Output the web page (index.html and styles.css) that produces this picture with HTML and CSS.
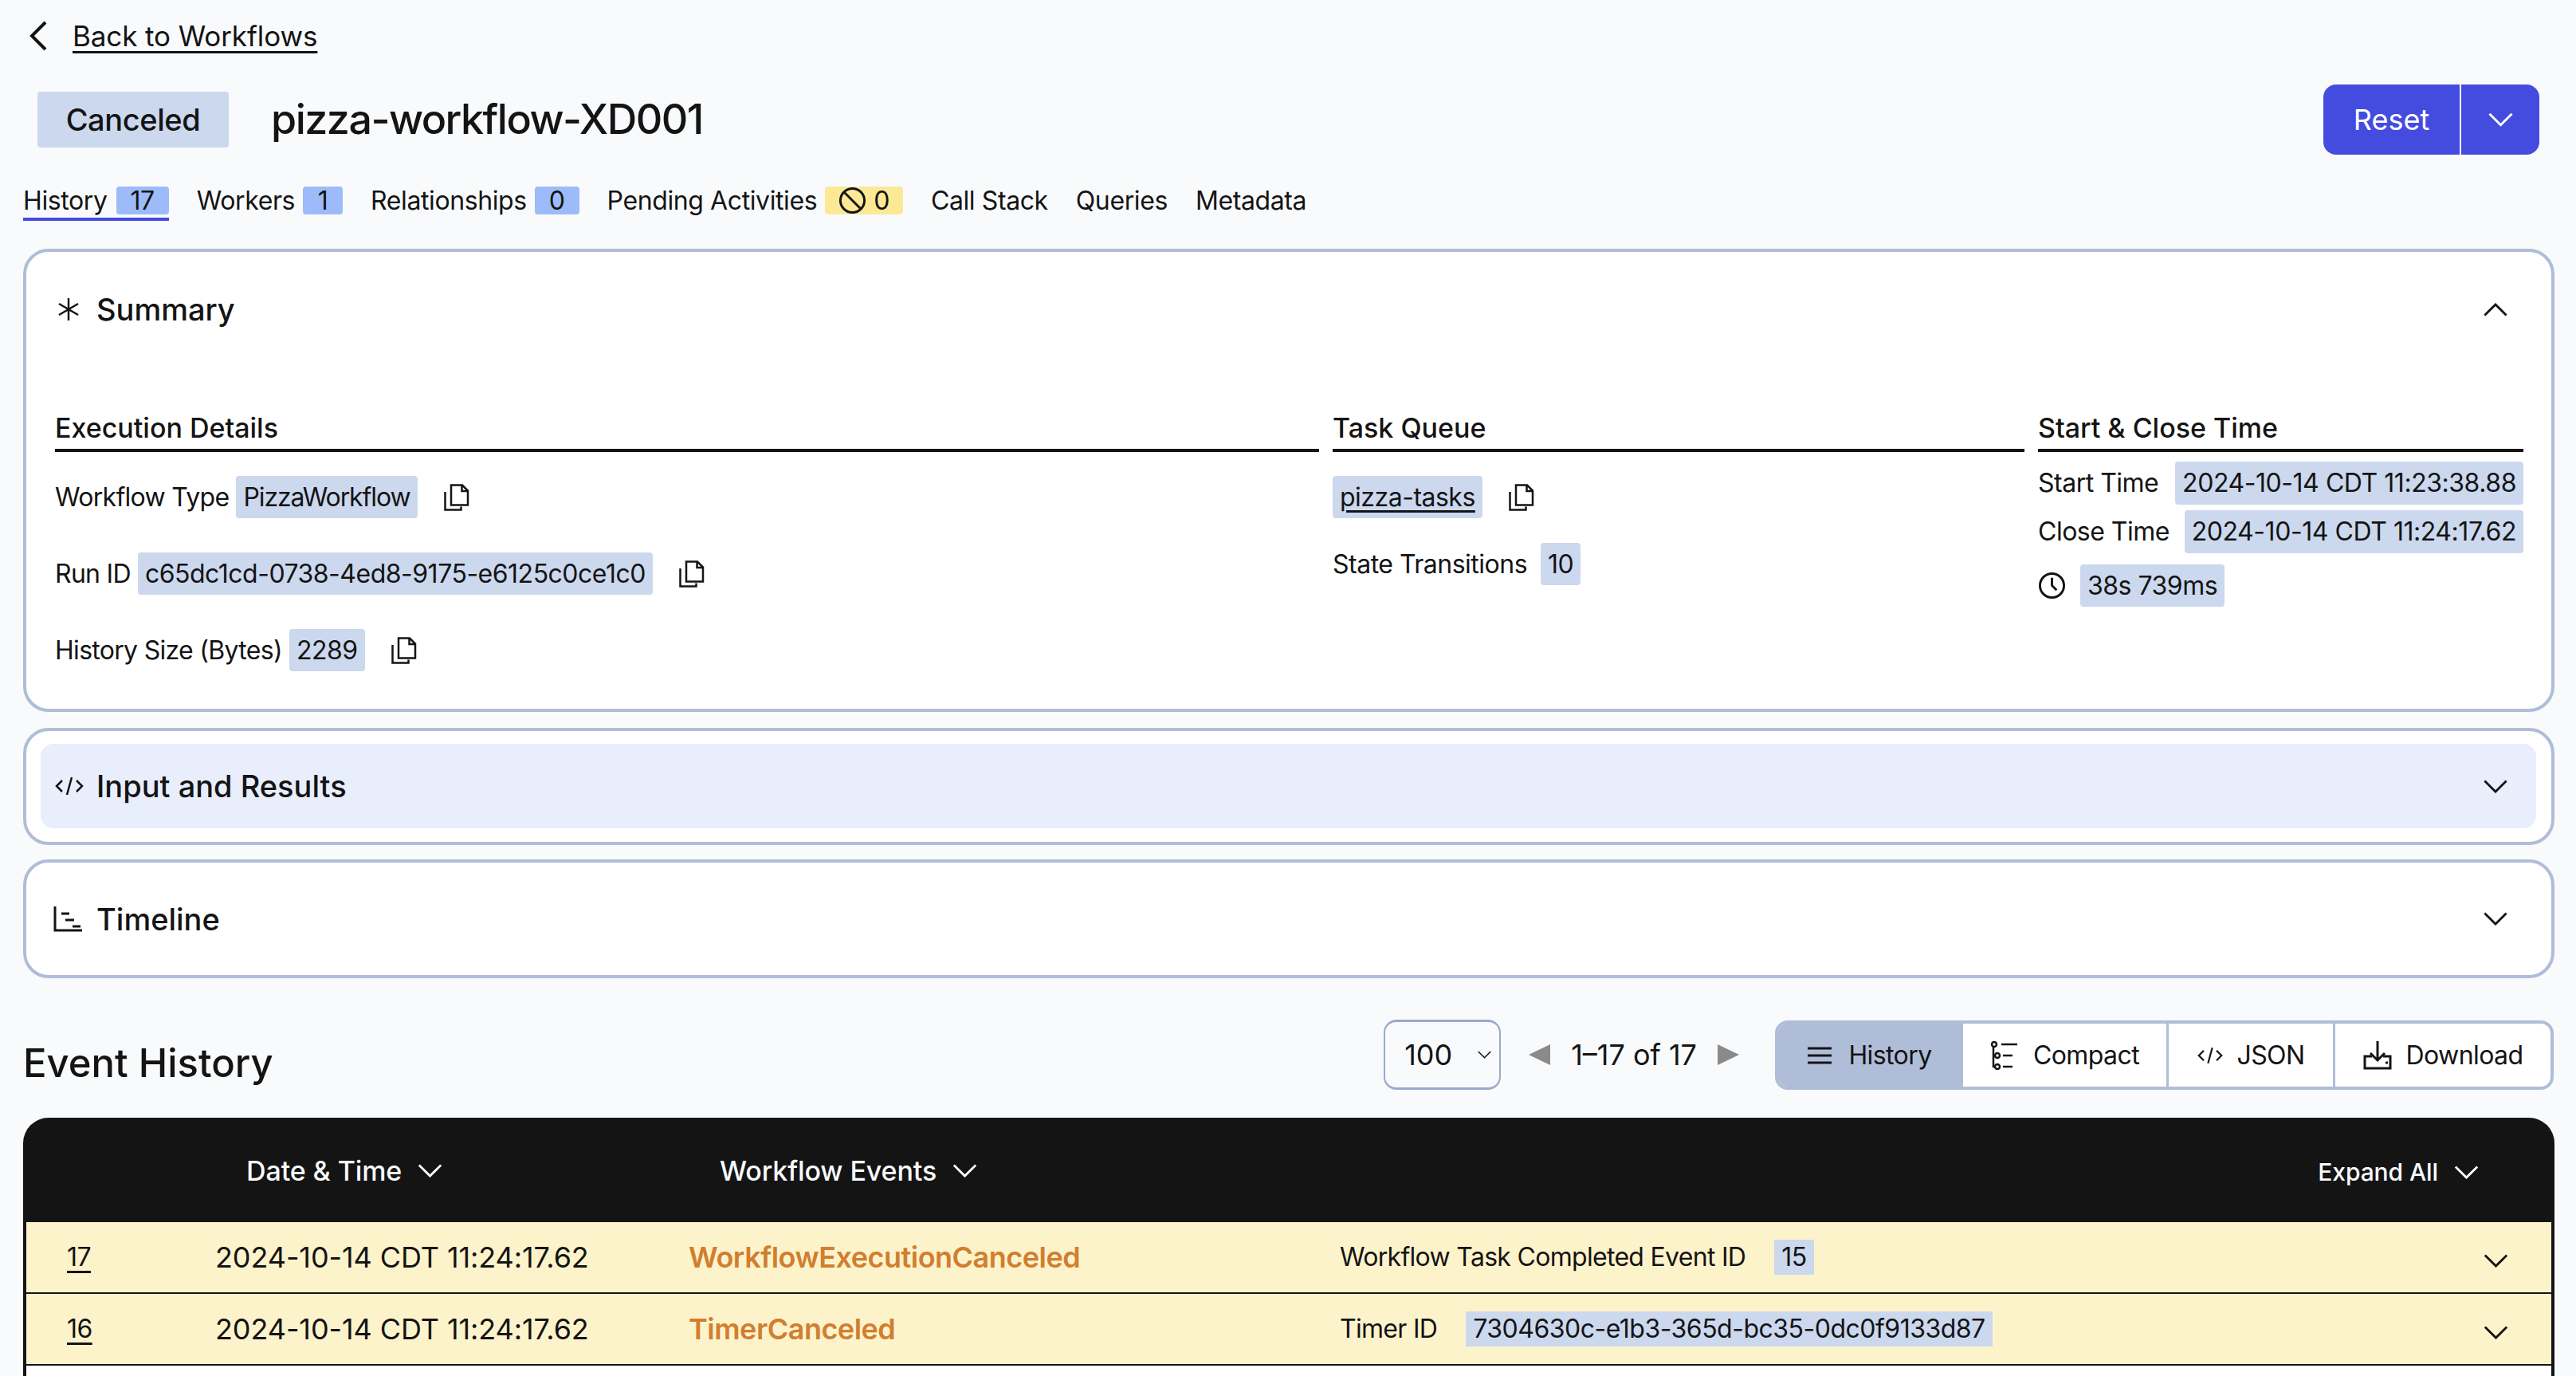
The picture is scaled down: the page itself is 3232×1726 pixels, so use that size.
FILE: index.html
```html
<!DOCTYPE html>
<html lang="en">
<head>
    <meta charset="UTF-8">
    <title>pizza-workflow-XD001</title>
    <link rel="stylesheet" href="styles.css">
</head>
<body>
    <svg class="defs" width="0" height="0">
        <symbol id="copy" viewBox="0 0 32 34">
            <path d="M9 1.500h14l7 7v18H9z M22.500 1.500v7.500h7.500" fill="none" stroke="currentColor" stroke-width="2.500"/>
            <path d="M1.500 10v22.500h20v-4" fill="none" stroke="currentColor" stroke-width="2.500"/>
        </symbol>
        <symbol id="down" viewBox="0 0 32 18">
            <path d="M1.500 1.500L16 16 30.500 1.500" fill="none" stroke="currentColor" stroke-width="3"/>
        </symbol>
    </svg>

    <div class="page">
        <a class="back">
            <svg class="back-icon" viewBox="0 0 22 38"><path d="M20 2L3 19l17 17" fill="none" stroke="currentColor" stroke-width="4"/></svg>
            <span>Back to Workflows</span>
        </a>

        <header class="head">
            <span class="status">Canceled</span>
            <h1>pizza-workflow-XD001</h1>
            <div class="reset">
                <button class="reset-main">Reset</button>
                <button class="reset-more"><svg class="chev-btn"><use href="#down"/></svg></button>
            </div>
        </header>

        <nav class="tabs">
            <a class="tab active">History <span class="count">17</span></a>
            <a class="tab">Workers <span class="count">1</span></a>
            <a class="tab">Relationships <span class="count">0</span></a>
            <a class="tab">Pending Activities <span class="count warn">
                <svg class="ban" viewBox="0 0 36 36"><circle cx="18" cy="18" r="15.500" fill="none" stroke="currentColor" stroke-width="3"/><path d="M7 7l22 22" stroke="currentColor" stroke-width="3"/></svg>0</span></a>
            <a class="tab">Call Stack</a>
            <a class="tab">Queries</a>
            <a class="tab">Metadata</a>
        </nav>

        <section class="card summary">
            <div class="card-head">
                <svg class="card-icon" viewBox="0 0 30 30"><path d="M15 1v28M3 8l24 14M27 8L3 22" fill="none" stroke="currentColor" stroke-width="2.500"/></svg>
                <h2>Summary</h2>
                <svg class="chev-card flip"><use href="#down"/></svg>
            </div>
            <div class="details">
                <div class="col">
                    <h3>Execution Details</h3>
                    <div class="rows">
                        <div class="row">Workflow Type <span class="pill tight">PizzaWorkflow</span><svg class="copy"><use href="#copy"/></svg></div>
                        <div class="row">Run ID <span class="pill">c65dc1cd-0738-4ed8-9175-e6125c0ce1c0</span><svg class="copy"><use href="#copy"/></svg></div>
                        <div class="row">History Size (Bytes) <span class="pill">2289</span><svg class="copy"><use href="#copy"/></svg></div>
                    </div>
                </div>
                <div class="col">
                    <h3>Task Queue</h3>
                    <div class="rows queue">
                        <div class="row"><span class="pill link">pizza-tasks</span><svg class="copy"><use href="#copy"/></svg></div>
                        <div class="row">State Transitions <span class="pill">10</span></div>
                    </div>
                </div>
                <div class="col">
                    <h3>Start &amp; Close Time</h3>
                    <div class="times">
                        <div class="row spread">Start Time <span class="pill date">2024-10-14 CDT 11:23:38.88</span></div>
                        <div class="row spread">Close Time <span class="pill date">2024-10-14 CDT 11:24:17.62</span></div>
                        <div class="row duration">
                            <svg class="clock" viewBox="0 0 36 36"><circle cx="18" cy="18" r="15.500" fill="none" stroke="currentColor" stroke-width="3"/><path d="M18 8v10l6 6" fill="none" stroke="currentColor" stroke-width="3"/></svg>
                            <span class="pill">38s 739ms</span>
                        </div>
                    </div>
                </div>
            </div>
        </section>

        <section class="card input">
            <div class="card-head hover">
                <svg class="card-icon code" viewBox="0 0 36 24"><path d="M9 5l-7 7 7 7M27 5l7 7-7 7M21 1l-6 22" fill="none" stroke="currentColor" stroke-width="2.500"/></svg>
                <h2>Input and Results</h2>
                <svg class="chev-card"><use href="#down"/></svg>
            </div>
        </section>

        <section class="card timeline">
            <div class="card-head">
                <svg class="card-icon line" viewBox="0 0 36 32"><path d="M2 0v30h34M10 9h10M15 17h11M24 25h10" fill="none" stroke="currentColor" stroke-width="3"/></svg>
                <h2>Timeline</h2>
                <svg class="chev-card"><use href="#down"/></svg>
            </div>
        </section>

        <div class="events-bar">
            <h2 class="events-title">Event History</h2>
            <div class="select">100 <svg class="chev-select"><use href="#down"/></svg></div>
            <div class="pager">
                <span class="tri left"></span>
                <span>1–17 of 17</span>
                <span class="tri right"></span>
            </div>
            <div class="views">
                <a class="view active">
                    <svg class="view-icon" viewBox="0 0 32 24"><path d="M1 3h30M1 12h30M1 21h30" stroke="currentColor" stroke-width="3"/></svg>History</a>
                <a class="view compact">
                    <svg class="view-icon" viewBox="0 0 36 36"><circle cx="5" cy="4" r="3" fill="none" stroke="currentColor" stroke-width="2.500"/><circle cx="9" cy="18" r="3" fill="none" stroke="currentColor" stroke-width="2.500"/><circle cx="9" cy="32" r="3" fill="none" stroke="currentColor" stroke-width="2.500"/><path d="M4 7v25h2M4 18h2M14 4h20M16 18h12M16 32h12" fill="none" stroke="currentColor" stroke-width="2.500"/></svg>Compact</a>
                <a class="view json">
                    <svg class="view-icon" viewBox="0 0 36 24"><path d="M9 5l-7 7 7 7M27 5l7 7-7 7M21 1l-6 22" fill="none" stroke="currentColor" stroke-width="2.500"/></svg>JSON</a>
                <a class="view download">
                    <svg class="view-icon" viewBox="0 0 36 36"><path d="M18 0v24M9 15l9 9 9-9M11 19H2v15h32V19h-9M28 27h3" fill="none" stroke="currentColor" stroke-width="3"/></svg>Download</a>
            </div>
        </div>

        <div class="table">
            <div class="table-head">
                <span class="th th-date">Date &amp; Time <svg class="chev-th"><use href="#down"/></svg></span>
                <span class="th th-events">Workflow Events <svg class="chev-th"><use href="#down"/></svg></span>
                <span class="th th-expand">Expand All <svg class="chev-th"><use href="#down"/></svg></span>
            </div>
            <div class="event">
                <a class="event-id">17</a>
                <span class="event-date">2024-10-14 CDT 11:24:17.62</span>
                <span class="event-name">WorkflowExecutionCanceled</span>
                <span class="event-attr">Workflow Task Completed Event ID <span class="code-val">15</span></span>
                <svg class="chev-row"><use href="#down"/></svg>
            </div>
            <div class="event">
                <a class="event-id">16</a>
                <span class="event-date">2024-10-14 CDT 11:24:17.62</span>
                <span class="event-name">TimerCanceled</span>
                <span class="event-attr">Timer ID <span class="code-val">7304630c-e1b3-365d-bc35-0dc0f9133d87</span></span>
                <svg class="chev-row"><use href="#down"/></svg>
            </div>
            <div class="event-empty"></div>
        </div>
    </div>
</body>
</html>
```

FILE: styles.css
```css
*{
    box-sizing: border-box;
}
html, body{
    margin: 0;
    height: 100%;
    overflow: hidden;
}
body{
    background-color: #f8fafc;
    color: #141414;
    font-family: Inter, "Noto Sans", sans-serif;
    font-size: 32px;
    line-height: 48px;
    letter-spacing: -0.6px;
}
h1, h2, h3{
    margin: 0;
    font-weight: 500;
}
svg{
    display: block;
    flex: none;
}
.defs{
    position: absolute;
}
.page{
    padding: 0 28px 0 29px;
}

/* top */
.back{
    display: flex;
    align-items: center;
    height: 90px;
    padding-left: 8px;
    gap: 32px;
    font-size: 35px;
    letter-spacing: -0.1px;
}
.back span{
    text-decoration: underline;
    text-underline-offset: 6px;
}
.back-icon{
    width: 22px;
    height: 38px;
}
.head{
    display: flex;
    align-items: center;
    height: 88px;
    margin-top: 16px;
    padding-left: 18px;
}
.status{
    display: flex;
    align-items: center;
    justify-content: center;
    width: 240px;
    height: 70px;
    background: #cbd8ee;
    border-radius: 4px;
    font-size: 38px;
    font-weight: 500;
    letter-spacing: -0.4px;
}
h1{
    margin-left: 53px;
    font-size: 52px;
    line-height: 72px;
    letter-spacing: -1.5px;
}
.reset{
    display: flex;
    height: 88px;
    margin-left: auto;
    margin-right: 18px;
    background: #444ce0;
    border-radius: 16px;
    color: white;
}
.reset button{
    border: 0;
    background: none;
    color: inherit;
    font: inherit;
    font-size: 36px;
    padding: 0;
}
.reset-main{
    width: 173px;
    border-right: 2px solid white !important;
}
.reset-more{
    display: flex;
    align-items: center;
    justify-content: center;
    width: 98px;
}
.chev-btn{
    width: 31px;
    height: 18px;
}

/* tabs */
.tabs{
    display: flex;
    gap: 35px;
    height: 43px;
    margin-top: 40px;
    margin-bottom: 35px;
    letter-spacing: -0.4px;
}
.tab{
    display: flex;
    gap: 10px;
    height: 43px;
    line-height: 35px;
}
.tab.active{
    gap: 11px;
    border-bottom: 4px solid #444ce0;
}
.count{
    display: flex;
    align-items: center;
    justify-content: center;
    height: 35px;
    min-width: 50px;
    padding: 0 18px;
    background: #9dbbf8;
    border-radius: 4px;
}
.count.warn{
    gap: 9px;
    padding: 0 17px;
    background: #fbe996;
}
.ban{
    width: 35px;
    height: 35px;
}

/* cards */
.card{
    border: 4px solid #b0bdd8;
    border-radius: 32px;
    background: white;
    margin-right: -1px;
}
.card-head{
    display: flex;
    align-items: center;
    height: 144px;
    padding: 0 55px 0 38px;
}
.card-head h2{
    font-size: 38px;
    letter-spacing: 0;
}
.card-icon{
    width: 30px;
    height: 30px;
    margin-right: 20px;
}
.card-icon.code{
    width: 36px;
    height: 24px;
    margin-right: 16px;
}
.card-icon.line{
    width: 36px;
    height: 32px;
    margin-right: 18px;
}
.chev-card{
    width: 30px;
    height: 17px;
    margin-left: auto;
}
.flip{
    transform: rotate(180deg);
}
.input{
    margin-top: 20px;
    height: 147px;
    padding: 16px 19px 16px 18px;
}
.input .card-head{
    height: 106px;
    padding: 0 36px 0 18px;
    background: #e8eefc;
    border-radius: 16px;
}
.timeline{
    margin-top: 18px;
    height: 149px;
}
.timeline .card-head{
    height: 141px;
    padding-left: 34px;
}

/* summary */
.details{
    display: grid;
    grid-template-columns: 1586px 868px 609px;
    gap: 17px;
    margin-top: 53px;
    padding: 0 34px 47px 36px;
}
h3{
    font-size: 34px;
    line-height: 48px;
    letter-spacing: 0;
    padding-bottom: 2px;
    border-bottom: 4px solid #141414;
}
.rows{
    display: flex;
    flex-direction: column;
    gap: 43px;
    margin-top: 30px;
}
.queue{
    gap: 31px;
}
.times{
    display: flex;
    flex-direction: column;
    gap: 7px;
    margin-top: 12px;
}
.row{
    display: flex;
    align-items: center;
    gap: 9px;
    height: 53px;
    white-space: nowrap;
    letter-spacing: -0.7px;
}
.queue .row, .times .row{
    gap: 17px;
    letter-spacing: -0.5px;
}
.times .spread{
    justify-content: space-between;
    height: 54px;
}
.times .duration{
    gap: 18px;
    margin-top: 7px;
}
.pill{
    display: block;
    height: 53px;
    line-height: 53px;
    padding: 0 9px;
    background: #cbd8ee;
    border-radius: 4px;
    letter-spacing: -0.5px;
}
.pill.tight{
    letter-spacing: -1.1px;
}
.pill.date{
    height: 54px;
    line-height: 54px;
    letter-spacing: -0.45px;
}
.pill.link{
    text-decoration: underline;
    text-underline-offset: 5px;
}
.copy{
    width: 32px;
    height: 34px;
    margin-left: 24px;
}
.queue .copy{
    margin-left: 16px;
}
.clock{
    width: 35px;
    height: 35px;
}

/* event bar */
.events-bar{
    display: flex;
    align-items: flex-end;
    height: 88px;
    margin-top: 52px;
}
.events-title{
    font-size: 49px;
    line-height: 72px;
    letter-spacing: 0;
    margin-right: auto;
    margin-bottom: -3px;
}
.select{
    display: flex;
    align-items: center;
    justify-content: space-between;
    width: 147px;
    height: 88px;
    padding: 0 10px 0 24px;
    border: 2px solid #9aa9cc;
    border-top-width: 3px;
    border-bottom-width: 3px;
    border-radius: 16px;
    font-size: 36px;
    letter-spacing: 0;
}
.chev-select{
    width: 17px;
    height: 10px;
}
.pager{
    display: flex;
    align-items: center;
    gap: 26px;
    height: 88px;
    margin-left: 35px;
    margin-right: 45px;
    font-size: 36px;
    letter-spacing: 0;
}
.tri{
    width: 0;
    height: 0;
    border-top: 13px solid transparent;
    border-bottom: 13px solid transparent;
}
.tri.left{
    border-right: 27px solid #8a8a8a;
}
.tri.right{
    border-left: 27px solid #8a8a8a;
}
.views{
    display: flex;
    width: 977px;
    height: 87px;
    border: 4px solid #b0bdd8;
    border-radius: 16px;
    background: white;
    overflow: hidden;
}
.view{
    display: flex;
    align-items: center;
    justify-content: center;
    gap: 18px;
    border-left: 3px solid #b0bdd8;
}
.view.active{
    width: 229px;
    background: #b0bdd8;
    border-left: 0;
    gap: 20px;
}
.view.compact{
    width: 258px;
}
.view.json{
    width: 209px;
}
.view.download{
    flex: 1;
}
.view-icon{
    width: 32px;
    height: 32px;
}
.view.compact .view-icon, .view.download .view-icon{
    width: 36px;
    height: 36px;
}

/* table */
.table{
    margin-top: 35px;
    margin-right: -1px;
}
.table-head{
    display: flex;
    align-items: center;
    height: 131px;
    padding: 2px 95px 0 280px;
    background: #141414;
    border-radius: 32px 32px 0 0;
    color: #f8fafc;
}
.th{
    display: flex;
    align-items: center;
    gap: 20px;
    font-size: 34px;
    font-weight: 500;
    letter-spacing: -0.1px;
}
.th-date{
    width: 594px;
}
.th-expand{
    margin-left: auto;
    margin-top: 3px;
    font-size: 30px;
}
.chev-th{
    width: 31px;
    height: 17px;
}
.event{
    display: grid;
    grid-template-columns: 186px 594px 817px 1fr 31px;
    align-items: center;
    height: 90px;
    padding: 0 54px 0 51px;
    background: #fdf3cb;
    border: 4px solid #141414;
    border-width: 0 4px 2px 4px;
}
.event-id{
    text-decoration: underline;
    text-underline-offset: 6px;
}
.event-date{
    font-size: 36px;
    letter-spacing: -0.1px;
}
.event-name{
    color: #d17e2f;
    font-size: 36px;
    font-weight: 600;
    letter-spacing: -0.5px;
}
.event-attr{
    display: flex;
    align-items: center;
    gap: 36px;
    letter-spacing: -0.7px;
}
.code-val{
    height: 44px;
    line-height: 44px;
    padding: 0 9px;
    background: #cbd8ee;
    letter-spacing: -0.5px;
}
.chev-row{
    width: 31px;
    height: 17px;
    margin-top: 8px;
}
.event-empty{
    height: 40px;
    background: white;
    border: solid #141414;
    border-width: 0 4px;
}
```
